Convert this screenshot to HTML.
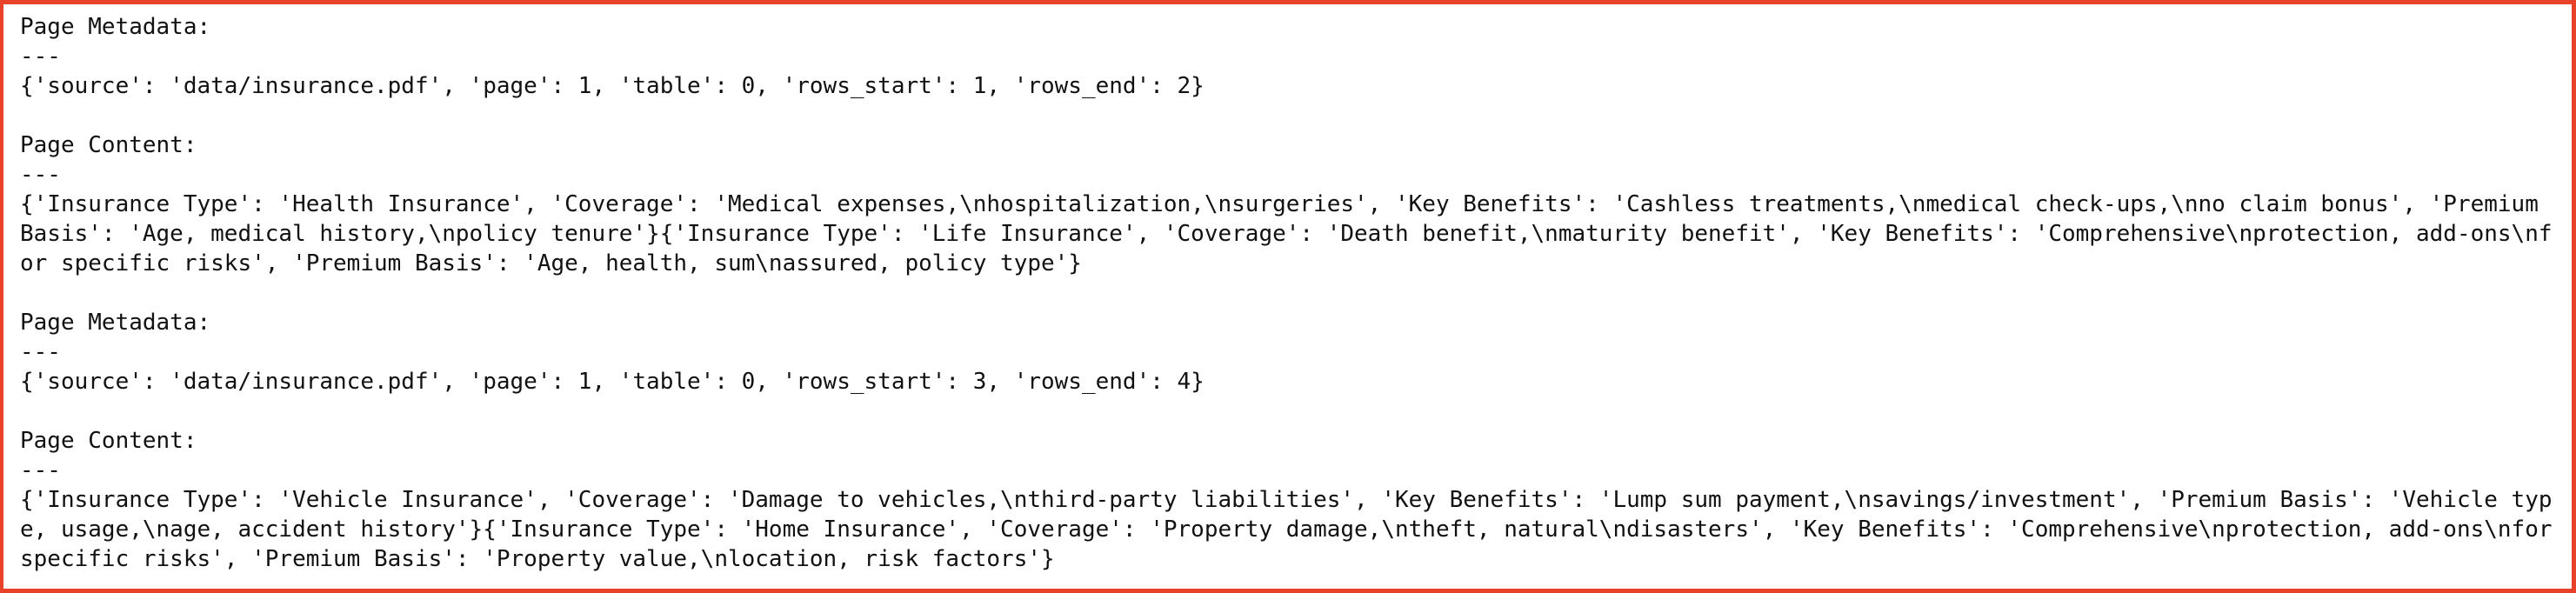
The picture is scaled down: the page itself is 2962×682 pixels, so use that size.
<!DOCTYPE html>
<html><head><meta charset="utf-8"><style>
html,body{margin:0;padding:0;background:#fff;}
.box{position:absolute;left:0;top:0;width:2962px;height:682px;box-sizing:border-box;border:5px solid #e8432a;border-left-width:4px;}
pre{position:absolute;left:19px;top:9px;margin:0;font-family:"DejaVu Sans Mono","Liberation Mono",monospace;font-size:26px;line-height:34px;color:#111;white-space:pre;}
</style></head><body><div class="box"><pre>Page Metadata:
---
{'source': 'data/insurance.pdf', 'page': 1, 'table': 0, 'rows_start': 1, 'rows_end': 2}

Page Content:
---
{'Insurance Type': 'Health Insurance', 'Coverage': 'Medical expenses,\nhospitalization,\nsurgeries', 'Key Benefits': 'Cashless treatments,\nmedical check-ups,\nno claim bonus', 'Premium
Basis': 'Age, medical history,\npolicy tenure'}{'Insurance Type': 'Life Insurance', 'Coverage': 'Death benefit,\nmaturity benefit', 'Key Benefits': 'Comprehensive\nprotection, add-ons\nf
or specific risks', 'Premium Basis': 'Age, health, sum\nassured, policy type'}

Page Metadata:
---
{'source': 'data/insurance.pdf', 'page': 1, 'table': 0, 'rows_start': 3, 'rows_end': 4}

Page Content:
---
{'Insurance Type': 'Vehicle Insurance', 'Coverage': 'Damage to vehicles,\nthird-party liabilities', 'Key Benefits': 'Lump sum payment,\nsavings/investment', 'Premium Basis': 'Vehicle typ
e, usage,\nage, accident history'}{'Insurance Type': 'Home Insurance', 'Coverage': 'Property damage,\ntheft, natural\ndisasters', 'Key Benefits': 'Comprehensive\nprotection, add-ons\nfor
specific risks', 'Premium Basis': 'Property value,\nlocation, risk factors'}</pre></div></body></html>
